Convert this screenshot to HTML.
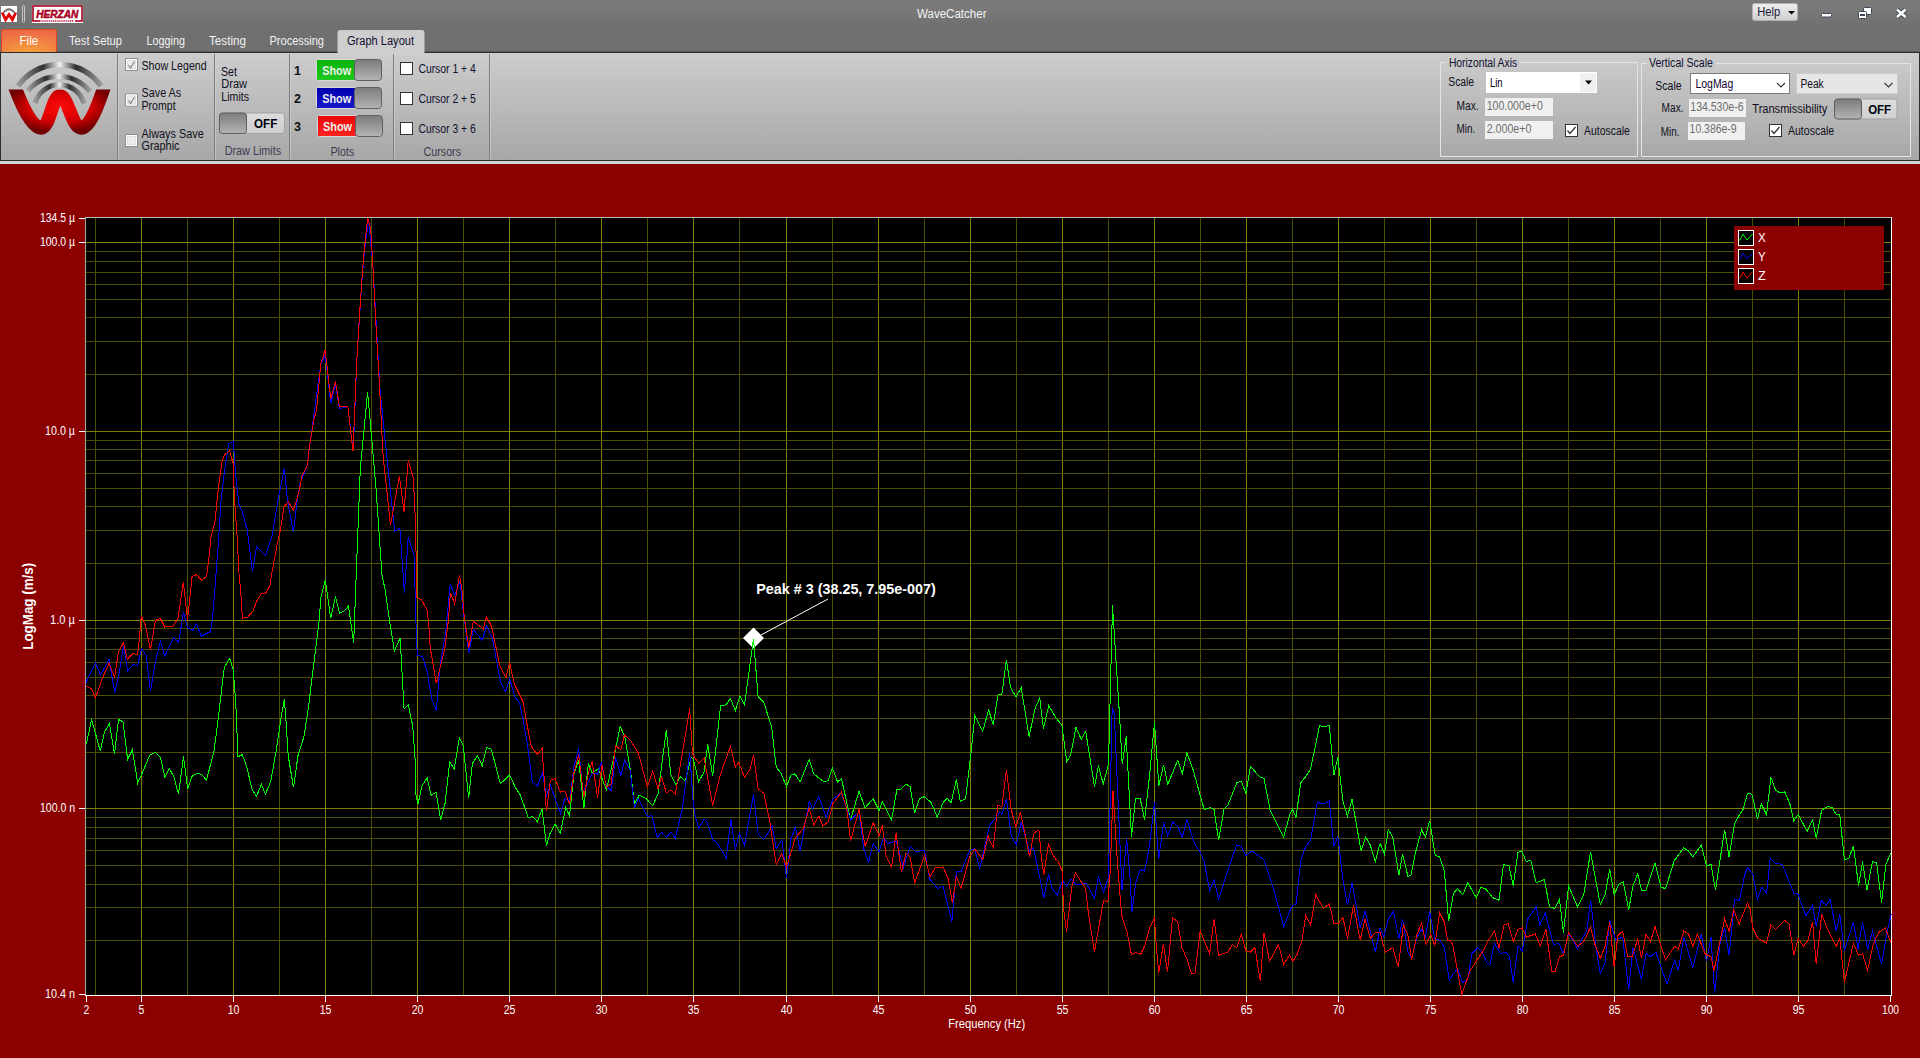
<!DOCTYPE html>
<html><head><meta charset="utf-8"><title>WaveCatcher</title>
<style>
html,body{margin:0;padding:0;background:#8b0000;overflow:hidden;width:1920px;height:1058px}
svg{display:block;font-family:"Liberation Sans", sans-serif}
</style></head><body>
<svg width="1920" height="1058" viewBox="0 0 1920 1058">
<defs>
<linearGradient id="gTitle" x1="0" y1="0" x2="0" y2="1"><stop offset="0" stop-color="#7a7a7a"/><stop offset="0.15" stop-color="#7a7a7a"/><stop offset="0.5" stop-color="#707070"/><stop offset="1" stop-color="#6f6f6f"/></linearGradient>
<linearGradient id="gRib" x1="0" y1="0" x2="0" y2="1"><stop offset="0" stop-color="#cdcdcd"/><stop offset="1" stop-color="#a7a7a7"/></linearGradient>
<linearGradient id="gTab" x1="0" y1="0" x2="0" y2="1"><stop offset="0" stop-color="#d2d2d2"/><stop offset="1" stop-color="#cdcdcd"/></linearGradient>
<radialGradient id="gFile" cx="0.5" cy="1" r="0.9"><stop offset="0" stop-color="#f6a23c"/><stop offset="1" stop-color="#ee6a46"/></radialGradient>
<linearGradient id="gKnob" x1="0" y1="0" x2="0" y2="1"><stop offset="0" stop-color="#7c7c7c"/><stop offset="1" stop-color="#b4b4b4"/></linearGradient>
<linearGradient id="gOffBg" x1="0" y1="0" x2="0" y2="1"><stop offset="0" stop-color="#dcdcdc"/><stop offset="1" stop-color="#cfcfcf"/></linearGradient>
<linearGradient id="gGreen" x1="0" y1="0" x2="0" y2="1"><stop offset="0" stop-color="#06b406"/><stop offset="1" stop-color="#1ec81e"/></linearGradient>
<linearGradient id="gBlue" x1="0" y1="0" x2="0" y2="1"><stop offset="0" stop-color="#0000b0"/><stop offset="1" stop-color="#1818c8"/></linearGradient>
<linearGradient id="gRed" x1="0" y1="0" x2="0" y2="1"><stop offset="0" stop-color="#e80808"/><stop offset="1" stop-color="#ff2020"/></linearGradient>
<linearGradient id="gHelp" x1="0" y1="0" x2="0" y2="1"><stop offset="0" stop-color="#eeeeee"/><stop offset="1" stop-color="#cfcfcf"/></linearGradient>
<radialGradient id="gW" cx="0.5" cy="0.5" r="0.6"><stop offset="0" stop-color="#ff0a0a"/><stop offset="0.6" stop-color="#d00000"/><stop offset="1" stop-color="#700000"/></radialGradient>
<linearGradient id="gArc" x1="0" y1="0" x2="1" y2="0"><stop offset="0" stop-color="#9a9a9a"/><stop offset="0.3" stop-color="#303030"/><stop offset="0.5" stop-color="#f0f0f0"/><stop offset="0.7" stop-color="#303030"/><stop offset="1" stop-color="#9a9a9a"/></linearGradient>
</defs>
<rect x="0" y="0" width="1920" height="52" fill="url(#gTitle)" />
<rect x="0" y="164" width="1920" height="894" fill="#8b0000" />
<rect x="0" y="161" width="1920" height="3" fill="#d2d6d6" />
<rect x="0" y="52" width="1920" height="109" fill="#2e2e2e" />
<rect x="0" y="51" width="1920" height="1" fill="#5a5a5a" />
<rect x="1" y="53" width="1918" height="107" fill="url(#gRib)" />
<rect x="1" y="6" width="16" height="16" fill="#ffffff" />
<path d="M2.2,12.5 L5.6,19.6 L9,14.6 L12.4,19.6 L15.8,12.5" stroke="#e00000" stroke-width="2.8" fill="none"/>
<path d="M3.5,12.5 Q9,5.5 14.5,12.5" stroke="#6a6a6a" stroke-width="1.4" fill="none"/>
<path d="M6,12 Q9,8 12,12" stroke="#909090" stroke-width="1" fill="none"/>
<rect x="22.5" y="5.5" width="2" height="17" rx="1" fill="none" stroke="#c8c8c8" stroke-width="1"/>
<rect x="32" y="5" width="51" height="18" fill="#ffffff" />
<rect x="33" y="6" width="49" height="15" fill="none" stroke="#a8001e" stroke-width="1.6"/>
<rect x="40.5" y="19.5" width="34.5" height="3" fill="#ffffff"/>
<text x="36.2" y="17.6" font-family="Liberation Sans" font-size="11.6" font-weight="bold" font-style="italic" fill="#a8001e" stroke="#a8001e" stroke-width="0.55" textLength="42.2" lengthAdjust="spacingAndGlyphs">HERZAN</text>
<path d="M41.5,21 L74,21" stroke="#b02040" stroke-width="1.3" stroke-dasharray="1.2,0.7"/>
<text x="917" y="18" font-size="12.5" fill="#f4f4f4" font-weight="normal" text-anchor="start" textLength="69.5" lengthAdjust="spacingAndGlyphs" >WaveCatcher</text>
<rect x="1752.5" y="3.5" width="45" height="17" rx="2" fill="url(#gHelp)" stroke="#b0b0b0" stroke-width="1"/>
<text x="1757.3" y="16" font-size="12" fill="#1a1a3a" font-weight="normal" text-anchor="start" textLength="23" lengthAdjust="spacingAndGlyphs" >Help</text>
<path d="M1788,11 L1795,11 L1791.5,14.5 Z" fill="#000"/>
<rect x="1821.5" y="13.5" width="10" height="3.5" rx="1" fill="#ffffff" stroke="#404858" stroke-width="1"/>
<rect x="1863.5" y="7.5" width="8" height="7" rx="1" fill="#ffffff" stroke="#404858" stroke-width="1"/>
<rect x="1858.5" y="11.5" width="8" height="7" rx="1" fill="#ffffff" stroke="#404858" stroke-width="1"/>
<rect x="1860" y="14" width="5" height="2" fill="#404858"/>
<path d="M1897,9.5 L1905.5,17 M1905.5,9.5 L1897,17" stroke="#404858" stroke-width="4.4"/>
<path d="M1897,9.5 L1905.5,17 M1905.5,9.5 L1897,17" stroke="#ffffff" stroke-width="2.6"/>
<path d="M1,52 L1,32 Q1,29 4,29 L54,29 Q57,29 57,32 L57,52 Z" fill="url(#gFile)"/>
<path d="M1.5,52 L1.5,32 Q1.5,29.5 4,29.5 L54,29.5 Q56.5,29.5 56.5,32 L56.5,52" fill="none" stroke="#e0461e" stroke-width="1"/>
<rect x="0" y="52" width="337" height="1" fill="#2e2e2e" />
<rect x="425" y="52" width="1495" height="1" fill="#2e2e2e" />
<text x="19.6" y="45" font-size="12" fill="#ffffff" font-weight="normal" text-anchor="start" textLength="18.5" lengthAdjust="spacingAndGlyphs" >File</text>
<text x="69" y="45" font-size="12" fill="#f2f2f2" font-weight="normal" text-anchor="start" textLength="53" lengthAdjust="spacingAndGlyphs" >Test Setup</text>
<text x="146.5" y="45" font-size="12" fill="#f2f2f2" font-weight="normal" text-anchor="start" textLength="38.4" lengthAdjust="spacingAndGlyphs" >Logging</text>
<text x="209" y="45" font-size="12" fill="#f2f2f2" font-weight="normal" text-anchor="start" textLength="37" lengthAdjust="spacingAndGlyphs" >Testing</text>
<text x="269.5" y="45" font-size="12" fill="#f2f2f2" font-weight="normal" text-anchor="start" textLength="54.5" lengthAdjust="spacingAndGlyphs" >Processing</text>
<path d="M337.5,54 L337.5,33 Q337.5,30 340.5,30 L421.5,30 Q424.5,30 424.5,33 L424.5,54 Z" fill="#cecece"/>
<text x="347" y="45" font-size="12" fill="#101030" font-weight="normal" text-anchor="start" textLength="67" lengthAdjust="spacingAndGlyphs" >Graph Layout</text>
<rect x="117" y="54" width="1" height="105" fill="#7e7e7e" />
<rect x="118" y="54" width="1" height="105" fill="#d8d8d8" opacity="0.5"/>
<rect x="214" y="54" width="1" height="105" fill="#7e7e7e" />
<rect x="215" y="54" width="1" height="105" fill="#d8d8d8" opacity="0.5"/>
<rect x="289" y="54" width="1" height="105" fill="#7e7e7e" />
<rect x="290" y="54" width="1" height="105" fill="#d8d8d8" opacity="0.5"/>
<rect x="393" y="54" width="1" height="105" fill="#7e7e7e" />
<rect x="394" y="54" width="1" height="105" fill="#d8d8d8" opacity="0.5"/>
<rect x="489" y="54" width="1" height="105" fill="#7e7e7e" />
<rect x="490" y="54" width="1" height="105" fill="#d8d8d8" opacity="0.5"/>
<path d="M18,86 A50.7,50.7 0 0 1 101,86" stroke="url(#gArc)" stroke-width="5.5" fill="none"/>
<path d="M28,90.5 A40.4,40.4 0 0 1 90,91.5" stroke="url(#gArc)" stroke-width="5" fill="none"/>
<path d="M35,103 A25.5,25.5 0 0 1 84,103.5" stroke="url(#gArc)" stroke-width="5" fill="none"/>
<clipPath id="cW"><rect x="0" y="89.5" width="120" height="60"/></clipPath>
<path clip-path="url(#cW)" d="M14.5,86 C21,104 32,128 41,128 C50,128 52,96 60,96 C68,96 72,128 81,128 C90,128 98.5,104 104.5,86" stroke="url(#gW)" stroke-width="13.5" fill="none" stroke-linecap="butt"/>
<rect x="125.5" y="58.5" width="12" height="12" fill="#f6f6f6" stroke="#8e8e8e" stroke-width="1"/>
<rect x="126.5" y="59.5" width="10" height="10" fill="none" stroke="#ffffff" stroke-width="1"/>
<rect x="127.5" y="60.5" width="8" height="8" fill="#ececec" stroke="#dedede" stroke-width="1"/>
<path d="M128.5,65 L130.5,68 L134.5,61.5" stroke="#8a8a8a" stroke-width="1.3" fill="none"/>
<text x="141.5" y="70" font-size="12" fill="#101020" font-weight="normal" text-anchor="start" textLength="65.2" lengthAdjust="spacingAndGlyphs" >Show Legend</text>
<rect x="125.5" y="94.0" width="12" height="12" fill="#f6f6f6" stroke="#8e8e8e" stroke-width="1"/>
<rect x="126.5" y="95.0" width="10" height="10" fill="none" stroke="#ffffff" stroke-width="1"/>
<rect x="127.5" y="96.0" width="8" height="8" fill="#ececec" stroke="#dedede" stroke-width="1"/>
<path d="M128.5,100.5 L130.5,103.5 L134.5,97.0" stroke="#8a8a8a" stroke-width="1.3" fill="none"/>
<text x="141.5" y="96.8" font-size="12" fill="#101020" font-weight="normal" text-anchor="start" textLength="39.7" lengthAdjust="spacingAndGlyphs" >Save As</text>
<text x="141.5" y="110" font-size="12" fill="#101020" font-weight="normal" text-anchor="start" textLength="34.2" lengthAdjust="spacingAndGlyphs" >Prompt</text>
<rect x="125.5" y="134.5" width="12" height="12" fill="#f6f6f6" stroke="#8e8e8e" stroke-width="1"/>
<rect x="126.5" y="135.5" width="10" height="10" fill="none" stroke="#ffffff" stroke-width="1"/>
<rect x="127.5" y="136.5" width="8" height="8" fill="#ececec" stroke="#dedede" stroke-width="1"/>
<text x="141.5" y="137.6" font-size="12" fill="#101020" font-weight="normal" text-anchor="start" textLength="62.2" lengthAdjust="spacingAndGlyphs" >Always Save</text>
<text x="141.5" y="150.4" font-size="12" fill="#101020" font-weight="normal" text-anchor="start" textLength="38" lengthAdjust="spacingAndGlyphs" >Graphic</text>
<text x="221" y="75.8" font-size="12" fill="#101020" font-weight="normal" text-anchor="start" textLength="15.9" lengthAdjust="spacingAndGlyphs" >Set</text>
<text x="221.3" y="88.3" font-size="12" fill="#101020" font-weight="normal" text-anchor="start" textLength="25.8" lengthAdjust="spacingAndGlyphs" >Draw</text>
<text x="221.3" y="100.5" font-size="12" fill="#101020" font-weight="normal" text-anchor="start" textLength="27.7" lengthAdjust="spacingAndGlyphs" >Limits</text>
<rect x="219.5" y="113.0" width="65" height="20.5" rx="3" fill="url(#gOffBg)" stroke="#a2a2a2" stroke-width="1"/>
<rect x="219.5" y="113.0" width="27" height="20.5" rx="3" fill="url(#gKnob)" stroke="#5e5e5e" stroke-width="1"/>
<text x="254" y="127.7" font-size="12.5" fill="#000010" font-weight="bold" text-anchor="start" textLength="23.4" lengthAdjust="spacingAndGlyphs" >OFF</text>
<text x="224.7" y="155.4" font-size="12" fill="#3c3c50" font-weight="normal" text-anchor="start" textLength="56.5" lengthAdjust="spacingAndGlyphs" >Draw Limits</text>
<rect x="316.5" y="59.5" width="65" height="21" rx="3" fill="#b0b0b0" stroke="#d8d8d8" stroke-width="1"/>
<rect x="317" y="60" width="38" height="20" fill="url(#gGreen)"/>
<rect x="354.5" y="59.5" width="27" height="21" rx="3" fill="url(#gKnob)" stroke="#606060" stroke-width="1"/>
<text x="322.2" y="75" font-size="12.5" fill="#ecf0ec" font-weight="bold" text-anchor="start" textLength="29" lengthAdjust="spacingAndGlyphs" >Show</text>
<rect x="316.5" y="87.5" width="65" height="21" rx="3" fill="#b0b0b0" stroke="#d8d8d8" stroke-width="1"/>
<rect x="317" y="88" width="38" height="20" fill="url(#gBlue)"/>
<rect x="354.5" y="87.5" width="27" height="21" rx="3" fill="url(#gKnob)" stroke="#606060" stroke-width="1"/>
<text x="322.2" y="103" font-size="12.5" fill="#ecf0ec" font-weight="bold" text-anchor="start" textLength="29" lengthAdjust="spacingAndGlyphs" >Show</text>
<rect x="317.5" y="115.5" width="65" height="21" rx="3" fill="#b0b0b0" stroke="#d8d8d8" stroke-width="1"/>
<rect x="318" y="116" width="38" height="20" fill="url(#gRed)"/>
<rect x="355.5" y="115.5" width="27" height="21" rx="3" fill="url(#gKnob)" stroke="#606060" stroke-width="1"/>
<text x="323" y="131.2" font-size="12.5" fill="#ecf0ec" font-weight="bold" text-anchor="start" textLength="29" lengthAdjust="spacingAndGlyphs" >Show</text>
<text x="294" y="74.9" font-size="12.5" fill="#101010" font-weight="bold" text-anchor="start" >1</text>
<text x="294" y="103" font-size="12.5" fill="#101010" font-weight="bold" text-anchor="start" >2</text>
<text x="294" y="130.9" font-size="12.5" fill="#101010" font-weight="bold" text-anchor="start" >3</text>
<text x="330.4" y="155.5" font-size="12" fill="#3c3c50" font-weight="normal" text-anchor="start" textLength="24" lengthAdjust="spacingAndGlyphs" >Plots</text>
<rect x="400.5" y="62.5" width="12" height="12" fill="#ffffff" stroke="#333333" stroke-width="1"/>
<text x="418.4" y="73" font-size="12" fill="#101030" font-weight="normal" text-anchor="start" textLength="57.4" lengthAdjust="spacingAndGlyphs" >Cursor 1 + 4</text>
<rect x="400.5" y="92.5" width="12" height="12" fill="#ffffff" stroke="#333333" stroke-width="1"/>
<text x="418.4" y="103" font-size="12" fill="#101030" font-weight="normal" text-anchor="start" textLength="57.4" lengthAdjust="spacingAndGlyphs" >Cursor 2 + 5</text>
<rect x="400.5" y="122.5" width="12" height="12" fill="#ffffff" stroke="#333333" stroke-width="1"/>
<text x="418.4" y="132.8" font-size="12" fill="#101030" font-weight="normal" text-anchor="start" textLength="57.4" lengthAdjust="spacingAndGlyphs" >Cursor 3 + 6</text>
<text x="423.4" y="155.5" font-size="12" fill="#3c3c50" font-weight="normal" text-anchor="start" textLength="37.7" lengthAdjust="spacingAndGlyphs" >Cursors</text>
<path d="M1446,62.5 L1440.5,62.5 L1440.5,156.5 L1637.5,156.5 L1637.5,62.5 L1520,62.5" stroke="#e4e4e4" stroke-width="1" fill="none"/>
<text x="1448.9" y="66.6" font-size="12" fill="#101030" font-weight="normal" text-anchor="start" textLength="68.2" lengthAdjust="spacingAndGlyphs" >Horizontal Axis</text>
<text x="1448.3" y="85.5" font-size="12" fill="#101020" font-weight="normal" text-anchor="start" textLength="25.8" lengthAdjust="spacingAndGlyphs" >Scale</text>
<rect x="1486" y="72" width="111" height="21" fill="#ffffff" />
<rect x="1580" y="73" width="16" height="19" fill="#f0f0f0" />
<path d="M1585,80.5 L1592,80.5 L1588.5,84.5 Z" fill="#000"/>
<text x="1490" y="86.9" font-size="12" fill="#000010" font-weight="normal" text-anchor="start" textLength="12.6" lengthAdjust="spacingAndGlyphs" >Lin</text>
<text x="1456.6" y="109.6" font-size="12" fill="#101020" font-weight="normal" text-anchor="start" textLength="22.1" lengthAdjust="spacingAndGlyphs" >Max.</text>
<rect x="1485" y="98" width="68" height="18" fill="#f0f0f0" />
<text x="1486.7" y="109.6" font-size="12" fill="#6d6d6d" font-weight="normal" text-anchor="start" textLength="56.1" lengthAdjust="spacingAndGlyphs" >100.000e+0</text>
<text x="1456.6" y="132.5" font-size="12" fill="#101020" font-weight="normal" text-anchor="start" textLength="18.7" lengthAdjust="spacingAndGlyphs" >Min.</text>
<rect x="1485" y="121" width="68" height="18" fill="#f0f0f0" />
<text x="1486.7" y="132.5" font-size="12" fill="#6d6d6d" font-weight="normal" text-anchor="start" textLength="44.7" lengthAdjust="spacingAndGlyphs" >2.000e+0</text>
<rect x="1565.5" y="124.5" width="12" height="12" fill="#ffffff" stroke="#333333" stroke-width="1"/>
<path d="M1567.5,130.5 L1570,133.5 L1575.5,127" stroke="#333" stroke-width="1.3" fill="none"/>
<text x="1584.1" y="134.8" font-size="12" fill="#101020" font-weight="normal" text-anchor="start" textLength="45.8" lengthAdjust="spacingAndGlyphs" >Autoscale</text>
<path d="M1647,63.5 L1641.5,63.5 L1641.5,156.5 L1910.5,156.5 L1910.5,63.5 L1716,63.5" stroke="#e4e4e4" stroke-width="1" fill="none"/>
<text x="1649" y="66.8" font-size="12" fill="#101030" font-weight="normal" text-anchor="start" textLength="63.9" lengthAdjust="spacingAndGlyphs" >Vertical Scale</text>
<text x="1655.3" y="89.7" font-size="12" fill="#101020" font-weight="normal" text-anchor="start" textLength="26.3" lengthAdjust="spacingAndGlyphs" >Scale</text>
<rect x="1690.5" y="73.5" width="99" height="20" fill="#ffffff" stroke="#7a7a7a" stroke-width="1"/>
<path d="M1777,83 L1781,87 L1785,83" stroke="#333" stroke-width="1.1" fill="none"/>
<text x="1695.4" y="88.2" font-size="12" fill="#100030" font-weight="normal" text-anchor="start" textLength="37.9" lengthAdjust="spacingAndGlyphs" >LogMag</text>
<rect x="1796.5" y="73.5" width="101" height="20" fill="#e6e6e6" stroke="#cccccc" stroke-width="1"/>
<path d="M1884.5,83 L1888.5,87 L1892.5,83" stroke="#333" stroke-width="1.1" fill="none"/>
<text x="1800.4" y="88.2" font-size="12" fill="#101020" font-weight="normal" text-anchor="start" textLength="23.3" lengthAdjust="spacingAndGlyphs" >Peak</text>
<text x="1661.6" y="112" font-size="12" fill="#101020" font-weight="normal" text-anchor="start" textLength="21.9" lengthAdjust="spacingAndGlyphs" >Max.</text>
<rect x="1689" y="99" width="57" height="18" fill="#f0f0f0" />
<text x="1690.3" y="110.5" font-size="12" fill="#6d6d6d" font-weight="normal" text-anchor="start" textLength="53.2" lengthAdjust="spacingAndGlyphs" >134.530e-6</text>
<text x="1752.3" y="112.7" font-size="12" fill="#101020" font-weight="normal" text-anchor="start" textLength="75.1" lengthAdjust="spacingAndGlyphs" >Transmissibility</text>
<rect x="1834.5" y="99.0" width="62.5" height="20" rx="3" fill="url(#gOffBg)" stroke="#a2a2a2" stroke-width="1"/>
<rect x="1834.5" y="99.0" width="27" height="20" rx="3" fill="url(#gKnob)" stroke="#5e5e5e" stroke-width="1"/>
<text x="1868.2" y="114.2" font-size="12.5" fill="#000010" font-weight="bold" text-anchor="start" textLength="22.9" lengthAdjust="spacingAndGlyphs" >OFF</text>
<text x="1660.7" y="136" font-size="12" fill="#101020" font-weight="normal" text-anchor="start" textLength="18.7" lengthAdjust="spacingAndGlyphs" >Min.</text>
<rect x="1688" y="122" width="57" height="18" fill="#f0f0f0" />
<text x="1689.6" y="133.4" font-size="12" fill="#6d6d6d" font-weight="normal" text-anchor="start" textLength="47" lengthAdjust="spacingAndGlyphs" >10.386e-9</text>
<rect x="1769.5" y="124.5" width="12" height="12" fill="#ffffff" stroke="#333333" stroke-width="1"/>
<path d="M1771.5,130.5 L1774,133.5 L1779.5,127" stroke="#333" stroke-width="1.3" fill="none"/>
<text x="1788" y="134.6" font-size="12" fill="#101020" font-weight="normal" text-anchor="start" textLength="46.2" lengthAdjust="spacingAndGlyphs" >Autoscale</text>
<rect x="85" y="217" width="1807" height="779" fill="#000000" />
<rect x="95" y="218" width="1" height="777" fill="#4e4e00"/>
<rect x="141" y="218" width="1" height="777" fill="#808000"/>
<rect x="187" y="218" width="1" height="777" fill="#4e4e00"/>
<rect x="233" y="218" width="1" height="777" fill="#808000"/>
<rect x="279" y="218" width="1" height="777" fill="#4e4e00"/>
<rect x="325" y="218" width="1" height="777" fill="#808000"/>
<rect x="371" y="218" width="1" height="777" fill="#4e4e00"/>
<rect x="417" y="218" width="1" height="777" fill="#808000"/>
<rect x="463" y="218" width="1" height="777" fill="#4e4e00"/>
<rect x="509" y="218" width="1" height="777" fill="#808000"/>
<rect x="555" y="218" width="1" height="777" fill="#4e4e00"/>
<rect x="601" y="218" width="1" height="777" fill="#808000"/>
<rect x="647" y="218" width="1" height="777" fill="#4e4e00"/>
<rect x="693" y="218" width="1" height="777" fill="#808000"/>
<rect x="739" y="218" width="1" height="777" fill="#4e4e00"/>
<rect x="786" y="218" width="1" height="777" fill="#808000"/>
<rect x="832" y="218" width="1" height="777" fill="#4e4e00"/>
<rect x="878" y="218" width="1" height="777" fill="#808000"/>
<rect x="924" y="218" width="1" height="777" fill="#4e4e00"/>
<rect x="970" y="218" width="1" height="777" fill="#808000"/>
<rect x="1016" y="218" width="1" height="777" fill="#4e4e00"/>
<rect x="1062" y="218" width="1" height="777" fill="#808000"/>
<rect x="1108" y="218" width="1" height="777" fill="#4e4e00"/>
<rect x="1154" y="218" width="1" height="777" fill="#808000"/>
<rect x="1200" y="218" width="1" height="777" fill="#4e4e00"/>
<rect x="1246" y="218" width="1" height="777" fill="#808000"/>
<rect x="1292" y="218" width="1" height="777" fill="#4e4e00"/>
<rect x="1338" y="218" width="1" height="777" fill="#808000"/>
<rect x="1384" y="218" width="1" height="777" fill="#4e4e00"/>
<rect x="1430" y="218" width="1" height="777" fill="#808000"/>
<rect x="1476" y="218" width="1" height="777" fill="#4e4e00"/>
<rect x="1522" y="218" width="1" height="777" fill="#808000"/>
<rect x="1568" y="218" width="1" height="777" fill="#4e4e00"/>
<rect x="1614" y="218" width="1" height="777" fill="#808000"/>
<rect x="1660" y="218" width="1" height="777" fill="#4e4e00"/>
<rect x="1706" y="218" width="1" height="777" fill="#808000"/>
<rect x="1752" y="218" width="1" height="777" fill="#4e4e00"/>
<rect x="1798" y="218" width="1" height="777" fill="#808000"/>
<rect x="1844" y="218" width="1" height="777" fill="#4e4e00"/>
<rect x="86" y="940" width="1805" height="1" fill="#4e4e00"/>
<rect x="86" y="907" width="1805" height="1" fill="#4e4e00"/>
<rect x="86" y="884" width="1805" height="1" fill="#4e4e00"/>
<rect x="86" y="865" width="1805" height="1" fill="#4e4e00"/>
<rect x="86" y="850" width="1805" height="1" fill="#4e4e00"/>
<rect x="86" y="838" width="1805" height="1" fill="#4e4e00"/>
<rect x="86" y="827" width="1805" height="1" fill="#4e4e00"/>
<rect x="86" y="817" width="1805" height="1" fill="#4e4e00"/>
<rect x="86" y="808" width="1805" height="1" fill="#808000"/>
<rect x="86" y="752" width="1805" height="1" fill="#4e4e00"/>
<rect x="86" y="718" width="1805" height="1" fill="#4e4e00"/>
<rect x="86" y="695" width="1805" height="1" fill="#4e4e00"/>
<rect x="86" y="677" width="1805" height="1" fill="#4e4e00"/>
<rect x="86" y="662" width="1805" height="1" fill="#4e4e00"/>
<rect x="86" y="649" width="1805" height="1" fill="#4e4e00"/>
<rect x="86" y="638" width="1805" height="1" fill="#4e4e00"/>
<rect x="86" y="628" width="1805" height="1" fill="#4e4e00"/>
<rect x="86" y="620" width="1805" height="1" fill="#808000"/>
<rect x="86" y="563" width="1805" height="1" fill="#4e4e00"/>
<rect x="86" y="530" width="1805" height="1" fill="#4e4e00"/>
<rect x="86" y="506" width="1805" height="1" fill="#4e4e00"/>
<rect x="86" y="488" width="1805" height="1" fill="#4e4e00"/>
<rect x="86" y="473" width="1805" height="1" fill="#4e4e00"/>
<rect x="86" y="460" width="1805" height="1" fill="#4e4e00"/>
<rect x="86" y="449" width="1805" height="1" fill="#4e4e00"/>
<rect x="86" y="440" width="1805" height="1" fill="#4e4e00"/>
<rect x="86" y="431" width="1805" height="1" fill="#808000"/>
<rect x="86" y="374" width="1805" height="1" fill="#4e4e00"/>
<rect x="86" y="341" width="1805" height="1" fill="#4e4e00"/>
<rect x="86" y="317" width="1805" height="1" fill="#4e4e00"/>
<rect x="86" y="299" width="1805" height="1" fill="#4e4e00"/>
<rect x="86" y="284" width="1805" height="1" fill="#4e4e00"/>
<rect x="86" y="272" width="1805" height="1" fill="#4e4e00"/>
<rect x="86" y="261" width="1805" height="1" fill="#4e4e00"/>
<rect x="86" y="251" width="1805" height="1" fill="#4e4e00"/>
<rect x="86" y="242" width="1805" height="1" fill="#808000"/>
<rect x="85" y="217" width="1807" height="1" fill="#b4b8b8" />
<rect x="85" y="217" width="1" height="779" fill="#a4a8a8" />
<rect x="1891" y="217" width="1" height="779" fill="#ffffff" />
<rect x="85" y="995" width="1807" height="1" fill="#ffffff" />
<rect x="79" y="218" width="6" height="1" fill="#ffffff" />
<text x="75" y="222" font-size="12" fill="#ffffff" text-anchor="end" textLength="35.0" lengthAdjust="spacingAndGlyphs">134.5 µ</text>
<rect x="79" y="242" width="6" height="1" fill="#ffffff" />
<text x="75" y="246" font-size="12" fill="#ffffff" text-anchor="end" textLength="35.0" lengthAdjust="spacingAndGlyphs">100.0 µ</text>
<rect x="79" y="431" width="6" height="1" fill="#ffffff" />
<text x="75" y="435" font-size="12" fill="#ffffff" text-anchor="end" textLength="30.0" lengthAdjust="spacingAndGlyphs">10.0 µ</text>
<rect x="79" y="620" width="6" height="1" fill="#ffffff" />
<text x="75" y="624" font-size="12" fill="#ffffff" text-anchor="end" textLength="25.0" lengthAdjust="spacingAndGlyphs">1.0 µ</text>
<rect x="79" y="808" width="6" height="1" fill="#ffffff" />
<text x="75" y="812" font-size="12" fill="#ffffff" text-anchor="end" textLength="35.0" lengthAdjust="spacingAndGlyphs">100.0 n</text>
<rect x="79" y="994" width="6" height="1" fill="#ffffff" />
<text x="75" y="998" font-size="12" fill="#ffffff" text-anchor="end" textLength="30.0" lengthAdjust="spacingAndGlyphs">10.4 n</text>
<rect x="86" y="996" width="1" height="6" fill="#ffffff" />
<text x="86.5" y="1014" font-size="12" fill="#ffffff" text-anchor="middle" textLength="5.8" lengthAdjust="spacingAndGlyphs">2</text>
<rect x="141" y="996" width="1" height="6" fill="#ffffff" />
<text x="141.5" y="1014" font-size="12" fill="#ffffff" text-anchor="middle" textLength="5.8" lengthAdjust="spacingAndGlyphs">5</text>
<rect x="233" y="996" width="1" height="6" fill="#ffffff" />
<text x="233.5" y="1014" font-size="12" fill="#ffffff" text-anchor="middle" textLength="11.7" lengthAdjust="spacingAndGlyphs">10</text>
<rect x="325" y="996" width="1" height="6" fill="#ffffff" />
<text x="325.5" y="1014" font-size="12" fill="#ffffff" text-anchor="middle" textLength="11.7" lengthAdjust="spacingAndGlyphs">15</text>
<rect x="417" y="996" width="1" height="6" fill="#ffffff" />
<text x="417.5" y="1014" font-size="12" fill="#ffffff" text-anchor="middle" textLength="11.7" lengthAdjust="spacingAndGlyphs">20</text>
<rect x="509" y="996" width="1" height="6" fill="#ffffff" />
<text x="509.5" y="1014" font-size="12" fill="#ffffff" text-anchor="middle" textLength="11.7" lengthAdjust="spacingAndGlyphs">25</text>
<rect x="601" y="996" width="1" height="6" fill="#ffffff" />
<text x="601.5" y="1014" font-size="12" fill="#ffffff" text-anchor="middle" textLength="11.7" lengthAdjust="spacingAndGlyphs">30</text>
<rect x="693" y="996" width="1" height="6" fill="#ffffff" />
<text x="693.5" y="1014" font-size="12" fill="#ffffff" text-anchor="middle" textLength="11.7" lengthAdjust="spacingAndGlyphs">35</text>
<rect x="786" y="996" width="1" height="6" fill="#ffffff" />
<text x="786.5" y="1014" font-size="12" fill="#ffffff" text-anchor="middle" textLength="11.7" lengthAdjust="spacingAndGlyphs">40</text>
<rect x="878" y="996" width="1" height="6" fill="#ffffff" />
<text x="878.5" y="1014" font-size="12" fill="#ffffff" text-anchor="middle" textLength="11.7" lengthAdjust="spacingAndGlyphs">45</text>
<rect x="970" y="996" width="1" height="6" fill="#ffffff" />
<text x="970.5" y="1014" font-size="12" fill="#ffffff" text-anchor="middle" textLength="11.7" lengthAdjust="spacingAndGlyphs">50</text>
<rect x="1062" y="996" width="1" height="6" fill="#ffffff" />
<text x="1062.5" y="1014" font-size="12" fill="#ffffff" text-anchor="middle" textLength="11.7" lengthAdjust="spacingAndGlyphs">55</text>
<rect x="1154" y="996" width="1" height="6" fill="#ffffff" />
<text x="1154.5" y="1014" font-size="12" fill="#ffffff" text-anchor="middle" textLength="11.7" lengthAdjust="spacingAndGlyphs">60</text>
<rect x="1246" y="996" width="1" height="6" fill="#ffffff" />
<text x="1246.5" y="1014" font-size="12" fill="#ffffff" text-anchor="middle" textLength="11.7" lengthAdjust="spacingAndGlyphs">65</text>
<rect x="1338" y="996" width="1" height="6" fill="#ffffff" />
<text x="1338.5" y="1014" font-size="12" fill="#ffffff" text-anchor="middle" textLength="11.7" lengthAdjust="spacingAndGlyphs">70</text>
<rect x="1430" y="996" width="1" height="6" fill="#ffffff" />
<text x="1430.5" y="1014" font-size="12" fill="#ffffff" text-anchor="middle" textLength="11.7" lengthAdjust="spacingAndGlyphs">75</text>
<rect x="1522" y="996" width="1" height="6" fill="#ffffff" />
<text x="1522.5" y="1014" font-size="12" fill="#ffffff" text-anchor="middle" textLength="11.7" lengthAdjust="spacingAndGlyphs">80</text>
<rect x="1614" y="996" width="1" height="6" fill="#ffffff" />
<text x="1614.5" y="1014" font-size="12" fill="#ffffff" text-anchor="middle" textLength="11.7" lengthAdjust="spacingAndGlyphs">85</text>
<rect x="1706" y="996" width="1" height="6" fill="#ffffff" />
<text x="1706.5" y="1014" font-size="12" fill="#ffffff" text-anchor="middle" textLength="11.7" lengthAdjust="spacingAndGlyphs">90</text>
<rect x="1798" y="996" width="1" height="6" fill="#ffffff" />
<text x="1798.5" y="1014" font-size="12" fill="#ffffff" text-anchor="middle" textLength="11.7" lengthAdjust="spacingAndGlyphs">95</text>
<rect x="1890" y="996" width="1" height="6" fill="#ffffff" />
<text x="1890.5" y="1014" font-size="12" fill="#ffffff" text-anchor="middle" textLength="17.1" lengthAdjust="spacingAndGlyphs">100</text>
<text x="948.3" y="1028" font-size="12" fill="#ffffff" font-weight="normal" text-anchor="start" textLength="76.8" lengthAdjust="spacingAndGlyphs" >Frequency (Hz)</text>
<text x="0" y="0" transform="translate(33.4,649.8) rotate(-90)" font-size="14.5" font-weight="bold" fill="#ffffff" textLength="87" lengthAdjust="spacingAndGlyphs">LogMag (m/s)</text>
<path d="M761,635 L828,599" stroke="#ffffff" stroke-width="1"/>
<path d="M753.5,627.5 L764,638 L753.5,648.5 L743,638 Z" fill="#ffffff"/>
<text x="756.3" y="593.8" font-size="14" fill="#ffffff" font-weight="bold" text-anchor="start" textLength="179.4" lengthAdjust="spacingAndGlyphs" >Peak # 3 (38.25, 7.95e-007)</text>
<polyline points="86.3,744.4 91.6,719.5 100.3,751.2 104.4,732.3 109.4,723.6 114.5,754.3 118.5,719.5 123.0,721.8 127.6,759.3 132.4,749.7 137.7,783.0 142.2,773.2 149.8,755.0 155.1,752.3 160.4,757.3 164.9,777.0 169.4,768.6 174.0,777.0 178.5,794.3 183.5,756.5 187.6,789.1 192.1,776.2 197.4,773.2 202.0,774.7 206.5,780.4 214.1,750.5 217.8,721.8 224.3,667.3 229.8,658.2 233.3,670.0 235.8,703.6 238.0,756.8 242.2,754.6 246.6,766.2 251.9,788.9 256.4,796.4 261.4,784.3 265.5,794.2 270.8,781.3 276.1,751.1 281.4,715.5 284.4,699.4 285.9,719.3 288.2,755.6 293.5,787.4 298.0,755.6 304.1,736.0 308.6,706.2 312.4,674.9 319.2,620.5 320.8,598.1 325.3,580.1 330.7,618.4 335.5,596.6 339.6,613.0 343.4,611.4 348.5,606.2 353.7,643.2 355.6,591.0 360.3,468.9 367.6,391.9 375.9,486.6 379.1,533.4 382.0,575.1 385.3,590.6 389.5,620.5 394.4,651.0 400.1,638.0 404.1,709.0 408.2,704.5 412.7,725.7 415.0,757.5 416.0,795.3 418.0,804.3 421.8,786.2 427.1,777.9 431.1,795.3 436.1,792.2 440.7,820.2 445.2,802.8 449.7,762.0 454.3,768.8 459.3,737.8 463.3,745.4 468.6,798.3 472.4,763.5 477.4,755.7 482.2,765.8 486.5,747.6 491.3,749.1 500.4,783.9 509.5,774.9 515.5,787.7 520.1,794.5 528.4,818.0 532.2,816.4 537.4,821.7 542.1,808.9 546.4,845.6 549.9,833.8 555.1,824.0 560.4,833.1 565.7,807.4 569.5,815.7 574.0,774.1 578.6,760.5 583.9,808.1 586.9,777.1 588.4,763.5 592.2,773.3 598.2,768.8 606.5,790.0 614.1,756.0 620.2,726.5 624.7,736.3 630.7,772.6 634.5,804.3 639.1,795.3 645.9,798.3 652.7,805.9 658.0,793.8 666.3,730.2 670.8,774.9 676.1,784.7 680.6,776.4 685.2,780.9 691.2,757.5 693.4,759.2 698.7,781.8 704.1,771.6 707.7,744.4 712.7,776.2 720.6,705.8 726.3,704.7 730.4,698.6 735.4,710.4 739.9,696.3 744.5,704.7 753.5,638.9 758.1,696.7 763.8,702.4 771.7,727.4 776.2,767.1 780.8,772.8 786.5,786.4 791.0,775.0 794.9,773.9 800.1,781.9 809.2,759.2 813.7,773.9 823.9,781.9 828.0,780.7 832.5,768.2 837.5,781.9 841.5,778.6 850.6,819.8 859.0,791.3 865.1,807.9 873.1,798.7 879.1,810.6 882.3,801.3 891.6,819.8 896.9,789.4 900.8,789.4 906.1,784.1 910.1,786.8 914.6,813.2 919.3,798.7 924.6,796.6 931.2,802.7 937.3,817.2 943.1,802.7 947.1,798.2 951.1,802.7 956.4,779.6 960.3,801.3 965.6,798.7 970.9,753.7 974.9,715.4 982.8,731.2 988.6,710.1 993.3,724.6 998.0,694.9 1001.9,694.2 1006.4,659.8 1010.6,687.6 1015.9,696.9 1021.2,687.6 1029.1,736.5 1035.0,708.8 1039.7,697.7 1043.4,728.6 1048.7,705.6 1056.1,718.0 1061.9,725.2 1066.7,761.7 1070.7,755.0 1076.0,727.3 1081.2,739.2 1085.7,731.2 1094.5,786.8 1098.4,765.6 1103.2,784.1 1108.5,764.3 1112.5,605.5 1119.6,716.7 1122.2,764.3 1126.2,736.5 1131.5,837.0 1135.5,798.7 1140.2,798.7 1144.6,819.5 1149.5,776.2 1154.5,722.3 1158.8,785.9 1163.6,764.7 1167.8,784.4 1177.8,760.2 1182.3,773.8 1186.9,752.6 1192.9,769.2 1204.1,809.5 1210.2,807.6 1214.1,809.5 1218.6,840.3 1224.1,808.6 1227.7,805.5 1236.8,782.8 1241.3,781.3 1245.9,793.4 1250.4,766.2 1259.5,776.8 1264.0,778.3 1270.1,810.1 1283.7,837.3 1289.4,815.4 1292.6,809.3 1295.9,817.6 1300.8,782.8 1306.6,775.3 1310.6,769.2 1319.6,725.4 1323.9,726.9 1329.3,725.4 1333.9,775.3 1337.8,757.1 1342.9,801.0 1347.5,816.1 1352.0,799.5 1361.1,850.9 1365.6,837.3 1370.2,844.9 1375.3,861.5 1380.1,843.3 1384.4,853.9 1388.3,829.7 1392.8,837.3 1398.9,875.1 1402.5,853.9 1408.0,876.6 1411.0,875.1 1415.5,852.4 1421.6,829.7 1425.5,837.3 1429.7,820.7 1435.2,855.4 1439.7,857.0 1444.4,871.3 1448.6,921.2 1450.0,912.9 1453.6,893.2 1457.5,888.7 1462.7,894.8 1467.8,882.7 1476.3,897.8 1480.8,887.2 1485.4,888.7 1492.9,897.8 1499.0,900.2 1503.5,864.5 1509.0,866.0 1513.2,885.7 1518.0,852.4 1521.7,850.9 1526.2,861.5 1530.7,860.0 1536.2,882.7 1544.4,879.6 1549.5,906.9 1554.9,908.4 1559.5,899.3 1563.4,932.6 1568.6,885.7 1577.6,906.9 1583.7,894.8 1590.6,851.7 1594.5,873.6 1600.3,904.6 1605.1,894.8 1609.7,869.1 1614.2,894.8 1618.7,884.2 1623.3,882.1 1628.7,909.9 1633.0,885.7 1637.8,873.6 1641.4,890.2 1646.0,890.2 1655.0,863.0 1661.1,887.2 1665.6,888.7 1674.1,860.9 1683.8,847.9 1688.3,850.9 1692.8,857.0 1701.3,844.9 1706.5,866.0 1711.0,864.5 1715.5,890.2 1724.6,829.7 1729.1,857.0 1734.6,823.7 1739.1,815.4 1743.2,809.3 1747.4,793.4 1750.0,793.4 1752.1,794.9 1757.5,819.1 1761.2,804.0 1766.6,814.6 1770.9,777.4 1775.7,790.4 1779.3,792.5 1784.8,791.9 1789.9,804.0 1793.8,820.7 1798.1,814.6 1807.2,831.2 1812.6,819.7 1816.2,837.9 1821.7,810.1 1827.7,806.4 1832.3,807.6 1836.2,814.6 1839.8,814.6 1844.4,860.0 1848.9,858.5 1853.4,845.8 1858.6,885.7 1862.5,861.5 1867.0,890.2 1872.5,861.5 1876.7,863.0 1881.6,903.2 1885.8,864.5 1891.2,852.4" fill="none" stroke="#00ff00" stroke-width="1" stroke-linejoin="miter" shape-rendering="crispEdges"/>
<polyline points="86.0,682.6 95.5,662.7 100.5,675.0 109.1,659.4 114.7,692.5 118.4,677.9 123.4,646.2 127.7,670.7 133.0,664.7 137.6,665.4 141.6,648.8 146.2,655.4 150.4,691.2 155.5,660.7 160.5,641.5 164.7,656.1 173.7,637.6 178.6,642.2 183.5,612.4 187.5,627.6 192.5,630.3 196.5,623.7 201.1,636.2 210.4,631.6 212.4,619.7 217.7,552.8 221.1,500.0 224.5,471.1 228.7,443.8 233.3,441.3 235.5,472.8 238.9,504.3 242.3,511.9 247.4,530.6 252.5,571.4 256.5,546.8 265.7,555.3 272.1,535.7 278.1,500.0 284.4,468.5 287.4,500.0 293.4,532.3 296.8,503.4 300.2,483.0 307.0,466.0 320.8,363.9 325.0,355.5 327.0,370.1 330.8,403.4 335.4,384.7 339.5,408.6 347.8,406.5 353.3,451.0 356.6,364.9 359.3,320.2 362.4,274.4 364.9,247.4 368.6,220.3 372.8,264.0 377.0,336.8 380.1,390.9 389.5,482.4 394.7,531.3 399.9,528.2 404.4,592.7 408.2,537.5 414.0,555.2 416.6,643.2 417.4,655.3 422.7,656.8 427.2,671.9 431.8,699.1 436.3,710.5 440.1,665.9 445.4,634.1 450.2,583.9 454.7,595.5 459.9,581.3 463.5,612.9 468.8,653.0 473.3,629.6 482.4,640.2 486.5,625.8 492.2,637.1 500.6,682.5 505.6,691.6 509.6,678.7 514.9,696.9 519.5,702.9 523.1,719.7 527.6,745.4 532.2,781.7 537.4,786.2 542.5,772.6 546.3,796.0 550.4,785.1 560.4,813.4 565.0,798.3 569.5,801.3 574.0,766.5 578.6,748.4 583.1,792.2 586.9,784.7 592.2,773.3 597.5,774.1 601.2,762.8 606.5,786.2 611.1,790.7 615.6,757.5 620.9,775.6 624.7,760.5 630.0,769.6 634.5,808.1 638.3,798.3 647.4,816.4 651.9,815.7 657.2,837.6 661.7,832.3 666.3,837.6 670.8,832.3 675.3,838.4 682.2,808.9 689.7,752.9 693.1,800.9 695.0,814.9 698.7,828.5 704.1,819.3 707.0,821.6 712.7,839.7 717.2,843.1 726.3,857.9 730.9,819.3 735.4,849.9 739.5,832.9 744.5,845.4 753.5,794.3 758.1,834.1 763.8,839.7 772.2,826.1 776.2,848.8 781.9,839.7 786.5,878.3 791.0,838.6 795.5,827.2 800.1,851.1 809.2,801.1 812.6,809.1 818.9,796.6 826.2,817.0 833.0,798.9 841.1,792.7 850.6,819.8 859.0,811.9 863.8,848.9 868.6,862.2 873.1,843.6 879.1,851.6 883.6,837.0 887.6,843.6 896.1,841.0 903.5,867.5 910.1,846.3 915.4,851.6 924.6,850.3 929.9,879.4 937.9,888.6 943.1,886.0 951.9,921.7 956.4,871.4 961.1,871.4 969.6,850.3 974.9,848.9 979.6,868.8 989.7,825.1 995.3,818.5 1000.0,811.9 1001.9,814.6 1006.4,798.7 1011.2,835.7 1016.4,845.0 1021.2,822.5 1029.7,851.6 1033.6,847.6 1040.0,879.3 1043.8,898.4 1048.5,874.4 1052.1,888.4 1057.2,895.2 1062.6,880.4 1066.6,886.0 1071.2,879.0 1075.7,884.6 1081.4,885.0 1086.0,882.9 1094.6,898.4 1098.3,877.3 1103.6,891.7 1108.5,877.2 1112.2,707.4 1114.3,714.1 1119.6,835.7 1122.0,890.4 1126.6,837.9 1130.0,877.8 1131.9,911.5 1136.0,882.1 1140.3,869.4 1144.5,871.4 1149.5,845.9 1154.5,802.5 1158.7,859.4 1163.6,822.2 1167.8,835.8 1172.7,822.2 1177.8,826.7 1182.3,837.3 1186.9,819.7 1194.4,843.3 1200.5,852.4 1204.1,861.5 1209.6,890.2 1214.1,879.6 1218.6,899.3 1230.7,861.5 1236.8,844.9 1241.3,846.4 1245.9,855.4 1251.9,850.9 1258.0,855.4 1264.0,860.0 1273.1,887.2 1283.7,926.5 1290.6,909.1 1293.0,905.3 1295.9,904.6 1300.8,860.7 1305.7,846.4 1310.6,840.3 1317.2,802.5 1323.9,804.0 1329.3,801.0 1333.9,846.4 1337.8,835.8 1342.9,879.6 1347.5,905.3 1352.0,882.7 1360.2,928.0 1365.0,911.4 1370.2,931.1 1375.3,952.2 1380.1,928.0 1383.8,937.1 1388.3,919.0 1393.4,911.4 1398.9,938.6 1402.5,919.0 1408.0,952.2 1411.6,958.3 1417.0,937.1 1421.6,929.5 1425.5,937.1 1429.7,911.4 1434.6,938.6 1439.7,940.1 1444.4,947.7 1449.2,980.2 1453.6,973.4 1457.5,968.9 1462.7,982.5 1467.8,979.5 1471.8,953.7 1477.8,947.7 1482.3,952.2 1486.9,962.8 1489.9,964.3 1494.4,943.2 1500.5,953.7 1505.9,952.2 1509.6,956.8 1513.2,982.5 1518.0,946.2 1522.3,950.7 1527.7,919.0 1536.2,906.9 1539.8,925.0 1545.3,912.9 1553.4,944.7 1558.6,943.2 1563.4,953.7 1568.6,934.1 1573.1,940.1 1577.6,949.2 1582.2,938.6 1586.7,931.1 1590.6,900.1 1593.6,925.0 1595.8,946.2 1600.3,973.4 1605.1,962.8 1609.7,920.5 1615.7,940.1 1622.7,937.1 1628.7,990.0 1633.0,947.7 1641.4,979.5 1646.0,953.7 1650.5,956.8 1655.9,952.2 1661.1,967.4 1667.1,984.0 1674.7,959.8 1678.3,970.4 1683.8,937.1 1692.8,967.4 1701.3,934.1 1706.5,961.3 1711.0,937.1 1714.6,993.1 1720.1,943.2 1724.6,928.0 1729.1,955.3 1734.6,899.3 1739.4,900.8 1744.3,876.6 1747.4,867.5 1750.0,870.6 1752.7,873.6 1757.5,899.3 1761.8,887.2 1766.6,893.2 1770.2,858.5 1774.8,863.0 1782.3,864.5 1793.8,893.2 1797.5,893.2 1805.9,915.9 1812.6,905.3 1816.2,926.5 1821.1,900.8 1826.2,905.3 1830.1,899.3 1836.2,931.1 1839.8,914.4 1844.4,950.7 1853.4,922.0 1858.0,949.2 1862.5,922.0 1867.6,949.2 1872.5,931.1 1881.6,964.3 1886.7,934.1 1891.2,914.4" fill="none" stroke="#0000ff" stroke-width="1" stroke-linejoin="miter" shape-rendering="crispEdges"/>
<polyline points="86.0,685.9 91.3,688.5 95.5,697.8 102.5,677.9 109.1,663.4 114.7,677.3 118.4,652.1 123.4,642.9 127.4,659.4 133.0,653.5 137.6,654.8 139.3,639.6 141.3,615.7 145.5,625.7 150.4,650.1 155.5,620.4 160.5,618.4 164.7,627.0 172.7,626.3 178.0,618.4 183.3,582.0 187.5,619.7 192.1,576.6 196.4,574.6 201.5,580.0 206.6,576.6 209.1,556.2 210.9,537.4 215.1,520.4 218.5,486.4 221.9,462.6 224.5,454.9 229.6,450.6 233.3,464.3 234.3,496.6 237.2,537.4 239.0,573.4 240.3,587.2 241.3,599.3 242.4,618.2 247.4,617.5 252.7,611.4 257.2,600.1 261.5,593.4 265.1,594.0 269.8,586.3 271.9,572.5 277.2,544.3 280.6,528.9 284.0,506.8 288.3,501.7 293.4,510.2 296.8,500.0 300.0,486.6 301.9,476.2 307.2,465.3 309.6,445.5 313.8,420.0 316.6,409.6 320.8,363.9 325.0,350.3 327.0,365.9 330.8,399.2 335.4,381.5 339.5,406.5 347.8,406.5 353.0,451.2 356.6,363.9 359.3,318.1 362.4,272.3 364.5,247.4 367.6,218.2 370.7,228.6 372.8,264.0 375.9,324.3 379.1,378.4 383.2,457.4 385.3,476.2 390.5,525.1 399.4,476.2 404.0,511.5 408.2,460.6 413.4,478.2 415.5,524.0 416.9,597.3 421.3,599.5 427.1,610.1 428.7,623.5 430.2,647.7 436.3,683.3 444.6,650.0 448.4,620.5 450.4,592.7 454.7,604.0 459.5,575.4 462.0,590.2 464.3,617.5 468.8,647.7 473.3,621.2 483.2,628.8 486.5,616.7 491.5,626.5 494.5,640.2 499.8,665.9 505.9,678.0 509.6,662.1 514.2,684.0 523.3,702.2 526.1,719.7 531.4,746.9 537.4,754.4 542.1,748.4 543.6,770.3 546.1,807.0 546.5,811.2 550.4,780.2 555.1,778.6 560.4,792.2 565.0,790.7 569.5,804.3 574.0,772.6 578.6,755.2 583.9,796.8 588.4,772.6 592.2,761.2 597.5,797.5 602.0,765.0 606.5,787.0 611.1,783.9 615.6,745.4 620.9,749.9 624.4,734.8 630.7,740.8 638.3,752.9 647.4,787.0 652.7,771.1 658.0,788.5 661.7,777.1 666.3,793.0 670.8,790.0 675.3,794.5 682.9,749.9 689.7,708.3 692.5,754.3 698.7,763.2 704.1,758.0 712.7,805.7 720.6,773.9 730.4,746.7 735.4,767.1 738.8,762.6 744.5,777.3 750.1,769.4 753.5,754.6 758.1,788.7 763.8,793.2 769.4,819.3 776.2,864.7 781.9,853.3 786.5,867.0 795.5,837.5 803.5,828.4 809.2,808.0 813.7,825.0 818.9,815.9 822.8,826.1 828.4,821.6 833.0,803.4 841.5,792.1 846.6,807.5 850.6,841.0 859.0,809.3 865.1,846.3 873.1,822.5 879.1,835.7 882.3,825.1 886.3,856.9 891.6,867.5 896.1,833.1 901.4,872.2 906.1,852.9 910.1,856.9 914.6,882.8 924.6,855.6 929.9,876.7 935.2,868.0 943.1,866.9 948.4,879.4 952.4,903.2 956.4,876.7 961.1,888.6 969.6,856.9 974.9,848.9 982.8,859.5 988.1,835.7 990.0,841.0 993.3,847.6 997.8,805.3 1001.9,806.6 1006.4,769.6 1011.2,809.3 1015.9,827.8 1020.4,811.9 1029.7,856.9 1033.6,833.1 1038.9,829.9 1041.5,858.1 1043.8,874.8 1048.5,844.1 1052.1,853.6 1056.1,859.5 1058.1,861.2 1062.2,871.6 1063.4,906.5 1066.5,932.2 1071.8,886.9 1075.4,872.6 1081.0,881.4 1085.4,888.4 1088.4,912.6 1094.4,951.9 1103.6,900.5 1107.9,901.9 1110.3,870.1 1113.0,790.8 1117.4,862.1 1121.7,915.6 1127.0,932.2 1131.5,954.9 1136.0,952.7 1140.6,954.2 1144.8,946.0 1149.6,927.7 1154.5,917.7 1155.7,938.3 1158.7,973.2 1163.4,943.8 1167.5,972.1 1172.5,917.7 1177.7,921.8 1181.9,947.5 1187.2,959.6 1191.3,973.2 1195.0,973.6 1200.2,930.9 1209.6,953.7 1214.1,919.0 1218.6,955.3 1227.7,952.2 1232.3,944.7 1236.8,947.7 1241.3,934.1 1245.9,950.7 1250.4,952.2 1254.9,947.7 1260.4,981.0 1264.0,932.6 1269.5,961.3 1278.5,944.7 1283.7,964.3 1289.4,955.3 1292.9,961.3 1297.6,953.7 1300.0,946.2 1302.1,940.1 1305.7,915.9 1310.6,925.0 1315.7,894.8 1323.3,908.4 1329.3,903.8 1333.9,923.5 1338.4,923.5 1342.9,917.4 1347.5,938.6 1353.5,905.3 1360.2,940.1 1365.0,919.0 1370.2,938.6 1375.3,932.6 1380.1,932.6 1385.3,952.2 1392.8,947.7 1398.3,967.4 1403.4,925.0 1408.0,935.6 1411.6,959.8 1417.0,934.1 1421.6,923.5 1426.1,944.7 1430.7,934.1 1434.6,946.2 1439.7,912.9 1444.3,922.0 1447.6,940.1 1450.0,940.1 1452.7,944.7 1461.8,994.6 1470.2,970.4 1482.3,952.2 1488.4,940.1 1494.4,931.1 1499.0,947.7 1504.1,925.0 1508.1,923.5 1513.2,941.6 1518.0,929.5 1522.3,928.0 1526.2,937.1 1535.3,934.1 1540.4,946.2 1545.9,929.5 1551.9,971.9 1554.9,971.9 1559.5,956.8 1563.4,955.3 1568.6,932.6 1577.6,946.2 1583.7,941.6 1590.6,927.3 1594.5,943.2 1600.3,958.3 1605.1,946.2 1609.7,922.0 1614.2,967.4 1617.8,935.6 1622.7,931.1 1627.8,956.8 1632.3,956.8 1637.8,938.6 1641.4,958.3 1646.0,934.1 1650.5,941.6 1655.0,926.5 1660.2,943.2 1665.6,959.8 1674.7,946.2 1678.3,949.2 1683.8,931.1 1688.3,933.5 1692.8,946.2 1697.4,934.1 1704.9,953.7 1711.0,956.8 1714.0,970.4 1724.6,919.0 1729.1,931.1 1733.7,909.9 1739.1,924.3 1747.4,903.1 1750.0,908.4 1752.7,928.0 1758.1,938.6 1766.6,943.2 1770.9,925.0 1775.7,929.5 1784.8,920.5 1789.0,923.5 1793.8,955.3 1798.1,938.6 1803.5,946.2 1808.1,940.1 1812.6,922.0 1816.2,964.3 1821.7,914.4 1827.7,929.5 1836.2,946.2 1839.8,938.6 1844.4,982.5 1853.4,943.2 1858.6,955.3 1862.5,953.7 1867.6,970.4 1873.1,944.7 1878.5,932.6 1885.2,928.0 1891.2,943.2" fill="none" stroke="#ff0000" stroke-width="1" stroke-linejoin="miter" shape-rendering="crispEdges"/>
<rect x="1734" y="226" width="150" height="64" fill="#8b0000" />
<rect x="1738.5" y="230.5" width="15" height="15" fill="#000" stroke="#ffffff" stroke-width="1"/>
<path d="M1739.5,240.5 L1743,234 L1747,240 L1752.5,234" stroke="#00ff00" stroke-width="1" fill="none"/>
<text x="1757.9" y="242" font-size="12" fill="#ffffff" font-weight="normal" text-anchor="start" textLength="7.7" lengthAdjust="spacingAndGlyphs" >X</text>
<rect x="1738.5" y="249.5" width="15" height="15" fill="#000" stroke="#ffffff" stroke-width="1"/>
<path d="M1739.5,259.5 L1743,253 L1747,259 L1752.5,253" stroke="#0000ff" stroke-width="1" fill="none"/>
<text x="1757.9" y="261" font-size="12" fill="#ffffff" font-weight="normal" text-anchor="start" textLength="7.7" lengthAdjust="spacingAndGlyphs" >Y</text>
<rect x="1738.5" y="268.5" width="15" height="15" fill="#000" stroke="#ffffff" stroke-width="1"/>
<path d="M1739.5,278.5 L1743,272 L1747,278 L1752.5,272" stroke="#ff0000" stroke-width="1" fill="none"/>
<text x="1757.9" y="280" font-size="12" fill="#ffffff" font-weight="normal" text-anchor="start" textLength="7.7" lengthAdjust="spacingAndGlyphs" >Z</text>
</svg>
</body></html>
